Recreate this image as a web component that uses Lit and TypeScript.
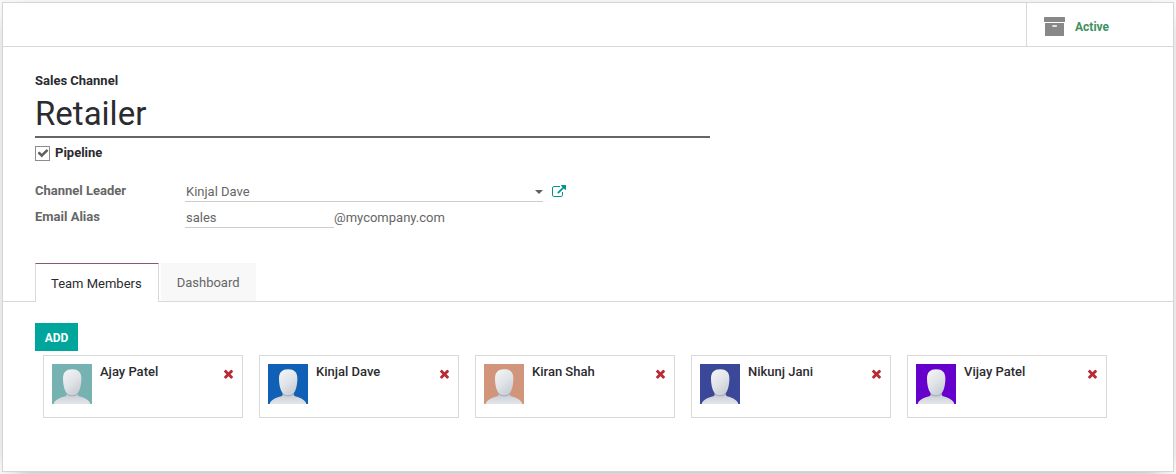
import { LitElement, html, css, svg } from "lit";
import { customElement, property, state } from "lit/decorators.js";
import { classMap } from "lit/directives/class-map.js";

interface Member {
  name: string;
  color: string;
}

const archiveIcon = svg`
  <svg viewBox="0 0 22 20" width="22" height="20" aria-hidden="true">
    <rect x="0" y="0" width="21" height="5" rx="0.6" fill="#888"/>
    <path fill="#888" fill-rule="evenodd" d="M1 6h19v12.4q0 .6-.6.6H1.600q-.6 0-.6-.6zM9 8.200q-.9 0-.9.800t.9.800h3.200q.9 0 .9-.8t-.9-.8z"/>
  </svg>`;

const externalIcon = svg`
  <svg viewBox="0 0 1792 1792" width="14" height="14" aria-hidden="true">
    <path fill="currentColor" d="M1408 928v320q0 119-84.5 203.5t-203.5 84.5h-832q-119 0-203.5-84.5t-84.5-203.5v-832q0-119 84.5-203.5t203.5-84.5h704q14 0 23 9t9 23v64q0 14-9 23t-23 9h-704q-66 0-113 47t-47 113v832q0 66 47 113t113 47h832q66 0 113-47t47-113v-320q0-14 9-23t23-9h64q14 0 23 9t9 23zm384-864v512q0 26-19 45t-45 19-45-19l-176-176-652 652q-10 10-23 10t-23-10l-114-114q-10-10-10-23t10-23l652-652-176-176q-19-19-19-45t19-45 45-19h512q26 0 45 19t19 45z"/>
  </svg>`;

const timesIcon = svg`
  <svg viewBox="302 302 1188 1252" width="9" height="10" aria-hidden="true">
    <path fill="currentColor" d="M1490 1322q0 40-28 68l-136 136q-28 28-68 28t-68-28l-294-294-294 294q-28 28-68 28t-68-28l-136-136q-28-28-28-68t28-68l294-294-294-294q-28-28-28-68t28-68l136-136q28-28 68-28t68 28l294 294 294-294q28-28 68-28t68 28l136 136q28 28 28 68t-28 68l-294 294 294 294q28 28 28 68z"/>
  </svg>`;

@customElement("member-card")
export class MemberCard extends LitElement {
  @property() name = "";
  @property() color = "";

  static styles = css`
    :host {
      display: flex;
      box-sizing: border-box;
      gap: 8px;
      min-height: 63px;
      padding: 8px;
      border: 1px solid #d9d9d9;
      background: #fff;
    }
    .avatar {
      flex: none;
      width: 40px;
      height: 40px;
    }
    .name {
      flex: 1;
      font-size: 13px;
      line-height: 15px;
      font-weight: 500;
      color: #2b2b30;
    }
    .remove {
      align-self: flex-start;
      display: flex;
      margin: 5px 1px 0 0;
      padding: 0;
      border: 0;
      background: none;
      color: #b82c38;
      cursor: pointer;
    }
  `;

  render() {
    return html`
      <svg class="avatar" viewBox="0 0 40 40" role="img" aria-label=${this.name}>
        <defs>
          <linearGradient id="head" x1="0.2" y1="0" x2="0.8" y2="1">
            <stop offset="0" stop-color="#f2f3f5" />
            <stop offset="0.5" stop-color="#e0e3e7" />
            <stop offset="1" stop-color="#c4c9d1" />
          </linearGradient>
          <linearGradient id="body" x1="0" y1="0" x2="0" y2="1">
            <stop offset="0" stop-color="#b4bcc8" />
            <stop offset="0.5" stop-color="#d3d7dd" />
            <stop offset="1" stop-color="#e3e5e9" />
          </linearGradient>
        </defs>
        <rect width="40" height="40" fill=${this.color} />
        <path
          fill="url(#body)"
          d="M1.700 40C2.200 36.500 7 33.800 12.500 32.500C14.500 32 15 31 14.800 28H25.600C25.400 31 25.900 32 27.900 32.500C33 33.800 37.800 36.500 38.300 40Z"
        />
        <path
          fill="url(#head)"
          d="M20.200 5.200C26.600 5.200 29.500 8.500 29.400 15C29.300 19.500 28.600 23.500 27.300 26.500C25.800 30 23.300 31.600 20.200 31.600S14.600 30 13.100 26.500C11.800 23.500 11.100 19.500 11 15C10.900 8.500 13.800 5.200 20.200 5.200Z"
        />
        <path
          fill="none"
          stroke="#98a2b2"
          stroke-width="0.8"
          d="M14.400 29.200C17 32.700 23.400 32.700 26 29.200"
        />
      </svg>
      <span class="name">${this.name}</span>
      <button class="remove" type="button" aria-label="Remove ${this.name}">${timesIcon}</button>
    `;
  }
}

@customElement("app-root")
export class AppRoot extends LitElement {
  @state() private tab = 0;

  private tabs = ["Team Members", "Dashboard"];

  private members: Member[] = [
    { name: "Ajay Patel", color: "#76b2b1" },
    { name: "Kinjal Dave", color: "#1061b5" },
    { name: "Kiran Shah", color: "#d1957b" },
    { name: "Nikunj Jani", color: "#3b4798" },
    { name: "Vijay Patel", color: "#6600cc" },
  ];

  static styles = css`
    :host {
      display: block;
      box-sizing: border-box;
      min-height: 100vh;
      padding: 2px;
      background: #f7f7f7;
      font-family: Roboto, "Liberation Sans", sans-serif;
      font-size: 13px;
      line-height: 18px;
      color: #666;
    }
    * {
      box-sizing: border-box;
    }
    input,
    select,
    button {
      font: inherit;
      color: inherit;
    }
    .sheet {
      padding-bottom: 53px;
      border: 1px solid #d5d5d5;
      background: #fff;
      box-shadow: 0 5px 20px -15px #000;
    }
    .statusbar {
      display: flex;
      justify-content: flex-end;
      height: 44px;
      border-bottom: 1px solid #d9d9d9;
    }
    .stat {
      display: flex;
      align-items: center;
      gap: 9px;
      width: 147px;
      padding: 4px 17px 0;
      border: 0;
      border-left: 1px solid #d9d9d9;
      background: none;
      color: #3f9160;
      font-size: 12px;
      font-weight: 700;
      cursor: pointer;
    }
    .form {
      padding: 25px 32px 0;
    }
    .title {
      width: 61%;
    }
    .title-label {
      display: block;
      color: #2b2b30;
      font-weight: 700;
    }
    .title-input {
      display: block;
      width: 100%;
      height: 48px;
      padding: 0;
      border: 0;
      border-bottom: 2px solid #666;
      outline: 0;
      background: none;
      color: #2b2b30;
      font-size: 33px;
      line-height: 46px;
    }
    .option {
      display: flex;
      align-items: center;
      gap: 5px;
      padding-top: 6px;
      color: #2b2b30;
      font-weight: 700;
    }
    .check {
      appearance: none;
      width: 15px;
      height: 15px;
      margin: 0;
      border: 1px solid #8c8c8c;
      background: #fff;
    }
    .check:checked {
      background: #fff
        url("data:image/svg+xml,%3Csvg xmlns='http://www.w3.org/2000/svg' viewBox='0 0 1792 1792'%3E%3Cpath fill='%23606060' d='M1671 566q0 40-28 68l-724 724-136 136q-28 28-68 28t-68-28l-136-136-362-362q-28-28-28-68t28-68l136-136q28-28 68-28t68 28l294 295 656-657q28-28 68-28t68 28l136 136q28 28 28 68z'/%3E%3C/svg%3E")
        center / 12px 12px no-repeat;
    }
    .fields {
      display: grid;
      grid-template-columns: 150px minmax(0, 1fr);
      row-gap: 6px;
      width: 48%;
      padding-top: 20px;
    }
    .label {
      font-weight: 700;
      line-height: 18px;
    }
    .field {
      display: flex;
      align-items: center;
    }
    .select,
    .text {
      height: 20px;
      padding: 0 0 0 1px;
      border: 0;
      border-bottom: 1px solid #ccc;
      border-radius: 0;
      outline: 0;
      background: none;
    }
    .select {
      flex: 1;
      appearance: none;
      background: url("data:image/svg+xml,%3Csvg xmlns='http://www.w3.org/2000/svg' viewBox='0 0 8 4'%3E%3Cpath fill='%23606060' d='M0 0h8L4 4z'/%3E%3C/svg%3E")
        right center / 8px 4px no-repeat;
    }
    .open {
      display: flex;
      margin-left: 9px;
      padding: 0;
      border: 0;
      background: none;
      color: #00948c;
      cursor: pointer;
    }
    .text {
      width: 149px;
    }
    .tabs {
      display: flex;
      gap: 2px;
      margin-top: 35px;
      padding: 0 32px;
      border-bottom: 1px solid #d9d9d9;
    }
    .tab {
      height: 38px;
      padding: 2px 16px 0;
      border: 0;
      background: #f8f8f8;
      cursor: pointer;
    }
    .tab.active {
      height: 39px;
      margin-bottom: -1px;
      padding: 2px 16px 0 15px;
      border: 1px solid #d9d9d9;
      border-top-color: #8b5576;
      border-bottom: 0;
      background: #fff;
      color: #2b2b30;
    }
    .page {
      padding: 21px 32px 0;
    }
    .add {
      display: block;
      min-width: 43px;
      height: 28px;
      padding: 2px 9px 0;
      border: 0;
      background: #00a69c;
      color: #fff;
      font-size: 12px;
      font-weight: 700;
      cursor: pointer;
    }
    .cards {
      display: grid;
      grid-template-columns: repeat(auto-fill, 200px);
      gap: 16px;
      margin: 4px 0 0 8px;
    }
  `;

  render() {
    return html`
      <main class="sheet">
        <header class="statusbar">
          <button class="stat" type="button">${archiveIcon}<span>Active</span></button>
        </header>
        <section class="form">
          <div class="title">
            <label class="title-label" for="name">Sales Channel</label>
            <input class="title-input" id="name" type="text" value="Retailer" />
          </div>
          <label class="option"><input class="check" type="checkbox" checked />Pipeline</label>
          <div class="fields">
            <label class="label" for="leader">Channel Leader</label>
            <div class="field">
              <select class="select" id="leader">
                ${this.members.map(
                  (m) => html`<option ?selected=${m.name === "Kinjal Dave"}>${m.name}</option>`
                )}
              </select>
              <button class="open" type="button" aria-label="Open channel leader">${externalIcon}</button>
            </div>
            <label class="label" for="alias">Email Alias</label>
            <div class="field">
              <input class="text" id="alias" type="text" value="sales" />
              <span>@mycompany.com</span>
            </div>
          </div>
        </section>
        <nav class="tabs" role="tablist">
          ${this.tabs.map(
            (t, i) => html`<button
              class=${classMap({ tab: true, active: i === this.tab })}
              type="button"
              role="tab"
              aria-selected=${i === this.tab}
              @click=${() => (this.tab = i)}
            >${t}</button>`
          )}
        </nav>
        <section class="page">
          <button class="add" type="button">ADD</button>
          <div class="cards">
            ${this.members.map(
              (m) => html`<member-card .name=${m.name} .color=${m.color}></member-card>`
            )}
          </div>
        </section>
      </main>
    `;
  }
}
